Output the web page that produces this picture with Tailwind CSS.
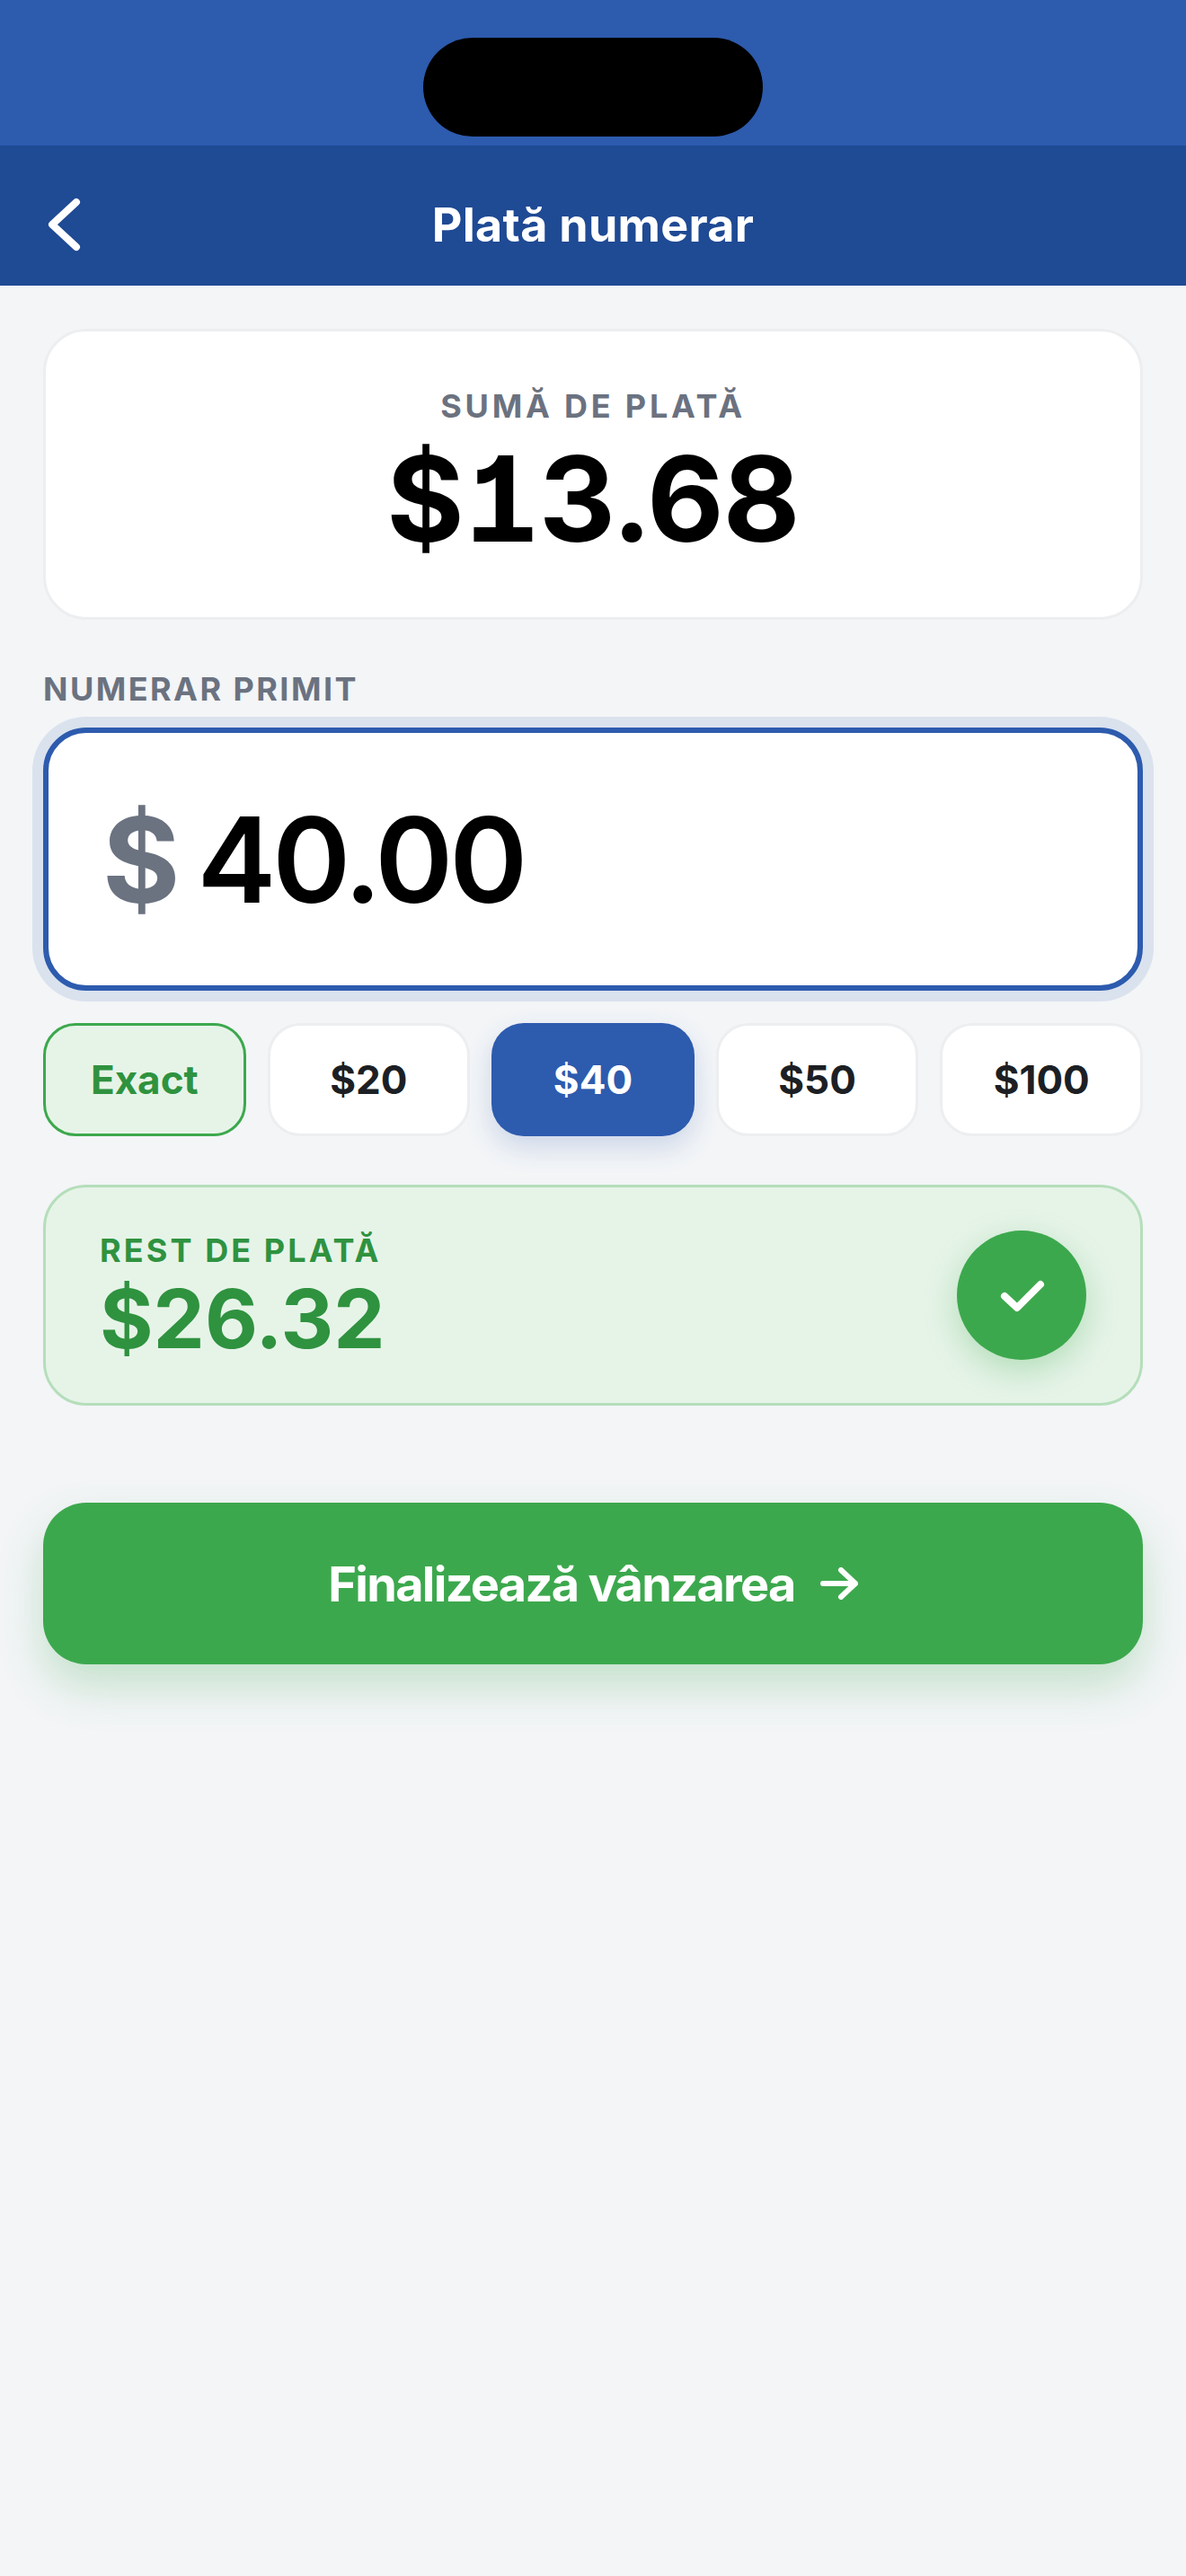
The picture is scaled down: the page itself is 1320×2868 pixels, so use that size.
<!DOCTYPE html>
<html lang="ro">
<head>
<meta charset="utf-8">
<script src="https://cdn.jsdelivr.net/npm/@tailwindcss/browser@4"></script>
</head>
<body class="m-0">
<div class="w-[1320px] h-[2868px] bg-[#f3f5f7] font-['Inter','Liberation_Sans',sans-serif] overflow-hidden">
  <div class="h-[162px] bg-[#2d5bae] flex justify-center pt-[42px]">
    <div class="w-[378px] h-[110px] rounded-[55px] bg-black"></div>
  </div>
  <div class="h-[156px] bg-[#1f4a94] relative flex items-center justify-center pt-[22px]">
    <svg class="absolute left-[48px] top-[50px] w-[48px] h-[76px]" viewBox="0 0 48 76" fill="none" stroke="#fff" stroke-width="8" stroke-linecap="round" stroke-linejoin="round"><path d="M37 13 L10 38 L37 63"/></svg>
    <span class="text-[52px] font-bold tracking-[0.3px] text-white leading-none">Plată numerar</span>
  </div>
  <div class="px-[48px] pt-[48px] flex flex-col">
    <div class="h-[324px] bg-white rounded-[48px] border-[3px] border-[#eceef0] flex flex-col items-center pt-[61px]">
      <div class="text-[36px] leading-[44px] font-bold tracking-[3.8px] text-[#6b7280]">SUMĂ DE PLATĂ</div>
      <div class="mt-[11px] text-[132px] leading-[140px] font-bold tracking-[-0.6px] text-black tabular-nums [font-feature-settings:'tnum','cv01']">$13.68</div>
    </div>
    <div class="mt-[55px] text-[36px] leading-[44px] font-bold tracking-[2.45px] text-[#6b7280]">NUMERAR PRIMIT</div>
    <div class="mt-[21px] h-[293px] bg-white rounded-[48px] border-[6px] border-[#2d5bae] shadow-[0_0_0_12px_rgba(45,91,174,0.12)] flex items-center pl-[60px]">
      <span class="text-[132px] font-bold text-[#6b7280] leading-none">$</span>
      <span class="ml-[19px] text-[132px] font-semibold tracking-[-4px] text-black leading-none">40.00</span>
    </div>
    <div class="mt-[36px] grid grid-cols-5 gap-[24px]">
      <div class="h-[126px] rounded-[36px] border-[3px] border-[#3ca84d] bg-[#e6f4e8] flex items-center justify-center text-[44px] font-bold text-[#2f923f]">Exact</div>
      <div class="h-[126px] rounded-[36px] border-[3px] border-[#eceef0] bg-white flex items-center justify-center text-[44px] font-bold text-[#1c1f24]">$20</div>
      <div class="h-[126px] rounded-[36px] bg-[#2d5bae] shadow-[0_12px_30px_rgba(45,91,174,0.2)] flex items-center justify-center text-[44px] font-bold text-white">$40</div>
      <div class="h-[126px] rounded-[36px] border-[3px] border-[#eceef0] bg-white flex items-center justify-center text-[44px] font-bold text-[#1c1f24]">$50</div>
      <div class="h-[126px] rounded-[36px] border-[3px] border-[#eceef0] bg-white flex items-center justify-center text-[44px] font-bold text-[#1c1f24]">$100</div>
    </div>
    <div class="mt-[54px] h-[246px] rounded-[48px] border-[3px] border-[#b5deba] bg-[#e6f4e8] flex items-center justify-between pl-[60px] pr-[60px]">
      <div class="flex flex-col">
        <div class="text-[36px] leading-[44px] font-bold tracking-[3.1px] text-[#2f923f]">REST DE PLATĂ</div>
        <div class="mt-[7px] text-[91px] leading-[94px] font-bold text-[#2f923f]">$26.32</div>
      </div>
      <div class="w-[144px] h-[144px] rounded-full bg-[#3ca84d] shadow-[0_12px_36px_rgba(60,168,77,0.3)]">
        <svg class="w-[144px] h-[144px]" viewBox="0 0 144 144" fill="none" stroke="#fff" stroke-width="8" stroke-linecap="round" stroke-linejoin="round"><path d="M53 73 L67 86 L93 60"/></svg>
      </div>
    </div>
    <div class="mt-[108px] h-[180px] rounded-[48px] bg-[#3ca84d] shadow-[0_24px_48px_rgba(60,168,77,0.25)] flex items-center justify-center text-[54px] font-bold tracking-[-1.7px] text-white gap-[28px]">
      <span>Finalizează vânzarea</span>
      <svg class="w-[42px] h-[36px]" viewBox="0 0 42 36" fill="none" stroke="#fff" stroke-width="6" stroke-linecap="round" stroke-linejoin="round"><path d="M3 18 H39 M23 3 L39 18 L23 33"/></svg>
    </div>
  </div>
</div>
</body>
</html>
